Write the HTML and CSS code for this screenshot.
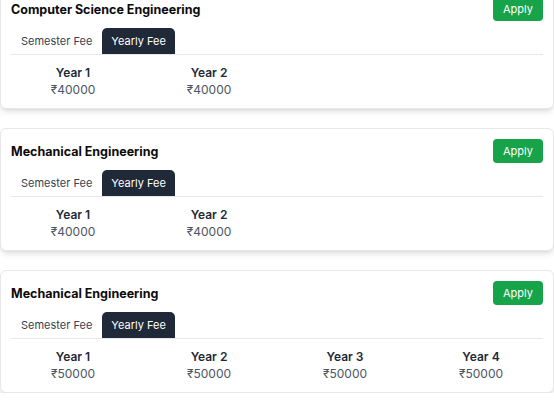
FILE: index.html
```html
<!DOCTYPE html>
<html lang="en">
<head>
<meta charset="utf-8">
<title>Fees</title>
<link rel="stylesheet" href="styles.css">
</head>
<body>
<main class="list">
  <section class="card">
    <div class="card-head">
      <h2 class="title">Computer Science Engineering</h2>
      <button class="apply">Apply</button>
    </div>
    <div class="tabs">
      <span class="tab">Semester Fee</span>
      <span class="tab active">Yearly Fee</span>
    </div>
    <div class="years">
      <div class="year"><div class="label">Year 1</div><div class="fee">₹40000</div></div>
      <div class="year"><div class="label">Year 2</div><div class="fee">₹40000</div></div>
    </div>
  </section>
  <section class="card">
    <div class="card-head">
      <h2 class="title">Mechanical Engineering</h2>
      <button class="apply">Apply</button>
    </div>
    <div class="tabs">
      <span class="tab">Semester Fee</span>
      <span class="tab active">Yearly Fee</span>
    </div>
    <div class="years">
      <div class="year"><div class="label">Year 1</div><div class="fee">₹40000</div></div>
      <div class="year"><div class="label">Year 2</div><div class="fee">₹40000</div></div>
    </div>
  </section>
  <section class="card">
    <div class="card-head">
      <h2 class="title">Mechanical Engineering</h2>
      <button class="apply">Apply</button>
    </div>
    <div class="tabs">
      <span class="tab">Semester Fee</span>
      <span class="tab active">Yearly Fee</span>
    </div>
    <div class="years">
      <div class="year"><div class="label">Year 1</div><div class="fee">₹50000</div></div>
      <div class="year"><div class="label">Year 2</div><div class="fee">₹50000</div></div>
      <div class="year"><div class="label">Year 3</div><div class="fee">₹50000</div></div>
      <div class="year"><div class="label">Year 4</div><div class="fee">₹50000</div></div>
    </div>
  </section>
</main>
</body>
</html>
```

FILE: styles.css
```css
html, body {
  margin: 0;
  padding: 0;
  overflow: hidden;
  background: #ffffff;
}

body {
  font-family: Inter, "Noto Sans", sans-serif;
  color: #111827;
}

.list {
  display: flex;
  flex-direction: column;
  gap: 19px;
  margin-top: -14px;
}

.card {
  background: #ffffff;
  border: 1px solid #e5e7eb;
  border-radius: 6px;
  padding: 10px;
  box-shadow: 0 4px 6px -1px rgba(0, 0, 0, 0.1), 0 2px 4px -2px rgba(0, 0, 0, 0.1);
}

.card-head {
  display: flex;
  justify-content: space-between;
  align-items: center;
  height: 24px;
}

.title {
  margin: 0;
  font-size: 12.5px;
  font-weight: 700;
  color: #0b0b0b;
}

.apply {
  height: 24px;
  padding: 0 10px;
  border: none;
  border-radius: 4px;
  background: #16a34a;
  color: #ffffff;
  font-family: inherit;
  font-size: 11px;
}

.tabs {
  display: flex;
  margin-top: 7px;
  border-bottom: 1px solid #e5e7eb;
}

.tab {
  height: 26px;
  line-height: 26px;
  padding: 0 10px;
  font-size: 11px;
  color: #374151;
  border-radius: 5px 5px 0 0;
}

.tab.active {
  padding: 0 9px;
  background: #1f2937;
  color: #ffffff;
}

.years {
  display: grid;
  grid-template-columns: repeat(4, 1fr);
  gap: 12px;
  padding-top: 9px;
  text-align: center;
}

.label {
  font-size: 12px;
  font-weight: 600;
  line-height: 17px;
  color: #1f2937;
}

.fee {
  font-size: 12px;
  line-height: 17px;
  color: #4b5563;
}
```
